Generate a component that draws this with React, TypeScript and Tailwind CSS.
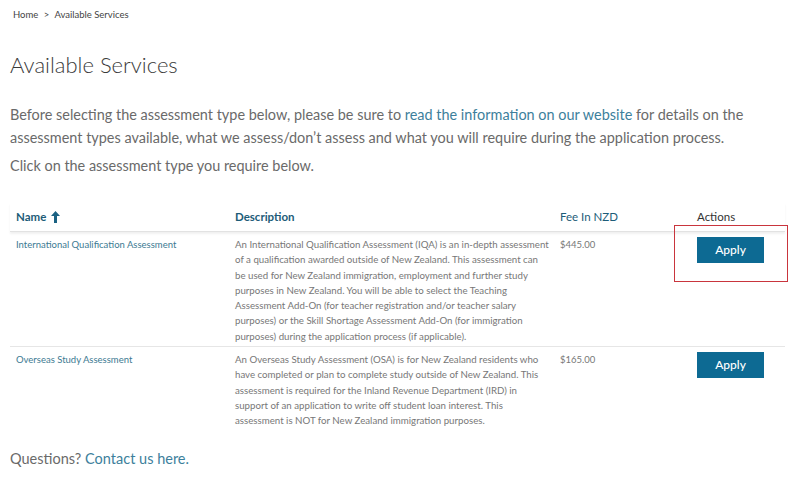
const ROWS = [
  {
    name: "International Qualification Assessment",
    fee: "$445.00",
    highlight: true,
    lines: [
      "An International Qualification Assessment (IQA) is an in-depth assessment",
      "of a qualification awarded outside of New Zealand. This assessment can",
      "be used for New Zealand immigration, employment and further study",
      "purposes in New Zealand. You will be able to select the Teaching",
      "Assessment Add-On (for teacher registration and/or teacher salary",
      "purposes) or the Skill Shortage Assessment Add-On (for immigration",
      "purposes) during the application process (if applicable).",
    ],
  },
  {
    name: "Overseas Study Assessment",
    fee: "$165.00",
    highlight: false,
    lines: [
      "An Overseas Study Assessment (OSA) is for New Zealand residents who",
      "have completed or plan to complete study outside of New Zealand. This",
      "assessment is required for the Inland Revenue Department (IRD) in",
      "support of an application to write off student loan interest. This",
      "assessment is NOT for New Zealand immigration purposes.",
    ],
  },
];

function SortArrow() {
  return (
    <svg width="9" height="12" viewBox="0 0 9 12" className="ml-[5px] inline-block">
      <path d="M4.5 0 L9 5 L6 5 L6 12 L3 12 L3 5 L0 5 Z" fill="#1b6283" />
    </svg>
  );
}

export default function App() {
  return (
    <div className="min-h-[486px] w-[800px] bg-white font-['Lato','Open_Sans',sans-serif] text-[#6a6a6a]">
      <div className="px-[13px] pt-[7px] text-[9.5px] leading-[16px] text-[#444]">
        Home <span className="mx-[3px]">&gt;</span> Available Services
      </div>

      <div className="px-[10px]">
        <h1 className="mt-[26px] text-[22px] font-light leading-[32px] text-[#3a3a3a]">
          Available Services
        </h1>

        <p className="mt-[22px] text-[14.45px] leading-[23px]">
          Before selecting the assessment type below, please be sure to{" "}
          <a className="text-[#3d7f9c]">read the information on our website</a> for
          details on the
          <br />
          assessment types available, what we assess/don’t assess and what you will
          require during the application process.
        </p>
        <p className="mt-[5px] text-[14.45px] leading-[23px]">
          Click on the assessment type you require below.
        </p>

        <div className="mt-[26px] w-[775px]">
          <div className="grid grid-cols-[219px_325px_137px_94px] border-b border-[#e2e2e2] py-[6px] text-[11.5px] font-bold leading-[16px] text-[#1d5c78] shadow-[0_2px_2px_rgba(0,0,0,0.06)]">
            <div className="flex items-center pl-[6px]">
              Name
              <SortArrow />
            </div>
            <div className="pl-[6px]">Description</div>
            <div className="pl-[6px] font-normal">Fee In NZD</div>
            <div className="pl-[6px] font-normal text-[#333]">Actions</div>
          </div>

          {ROWS.map((r, i) => (
            <div
              key={r.name}
              className={`grid grid-cols-[219px_325px_137px_94px] pt-[5px] text-[9.5px] leading-[15.3px] ${
                i === 0 ? "border-b border-[#e6e6e6] pb-[2px]" : ""
              }`}
            >
              <div className="pl-[6px] text-[#3c7a92]">{r.name}</div>
              <div className="min-w-0 pl-[6px] text-[9.7px] text-[#777]">
                {r.lines.map((l) => (
                  <div key={l} className="whitespace-nowrap">
                    {l}
                  </div>
                ))}
              </div>
              <div className="pl-[6px] text-[#777]">{r.fee}</div>
              <div className="pl-[6px]">
                <div className="relative inline-block">
                  <button className="h-[26px] w-[67px] bg-[#0d6a93] text-[12px] font-medium text-white">
                    Apply
                  </button>
                  {r.highlight && (
                    <div className="absolute left-[-23px] top-[-12px] h-[57px] w-[114px] border-[1.5px] border-[#c9353d]" />
                  )}
                </div>
              </div>
            </div>
          ))}
        </div>

        <p className="mt-[18px] text-[14.5px] leading-[23px]">
          Questions? <a className="text-[#3d7f9c]">Contact us here.</a>
        </p>
      </div>
    </div>
  );
}
